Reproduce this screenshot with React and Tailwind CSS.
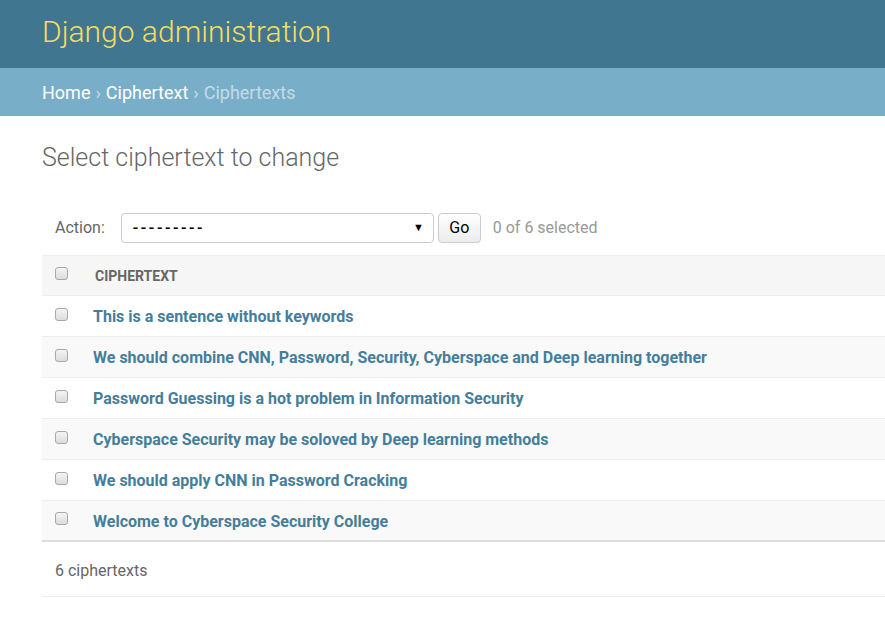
const rows = [
  'This is a sentence without keywords',
  'We should combine CNN, Password, Security, Cyberspace and Deep learning together',
  'Password Guessing is a hot problem in Information Security',
  'Cyberspace Security may be soloved by Deep learning methods',
  'We should apply CNN in Password Cracking',
  'Welcome to Cyberspace Security College',
];

function Checkbox() {
  return (
    <span className="block w-[13px] h-[13px] mb-[6px] rounded-[3px] border border-[#a9a9a9] bg-gradient-to-b from-[#f4f4f4] to-[#dcdcdc]" />
  );
}

export default function App() {
  return (
    <div className="min-h-screen bg-white font-['Roboto',sans-serif] text-[#333] overflow-hidden">
      <header className="h-[68px] bg-[#417690] flex items-center px-[42px] pb-[4px]">
        <h1 className="text-[30px] font-light text-[#f5dd5d] leading-none">Django administration</h1>
      </header>
      <nav className="h-[48px] bg-[#79aec8] flex items-center px-[42px] text-[18px] text-white">
        <span>Home</span>
        <span className="mx-[5px] text-[#c4dce8]">›</span>
        <span>Ciphertext</span>
        <span className="mx-[5px] text-[#c4dce8]">›</span>
        <span className="text-[#c4dce8]">Ciphertexts</span>
      </nav>

      <main className="pl-[42px]">
        <h2 className="mt-[27px] text-[25px] font-light text-[#666] leading-[30px]">Select ciphertext to change</h2>

        <div className="mt-[40px] flex items-center h-[30px] pl-[13px] text-[16px]">
          <span className="text-[#666] mr-[16px]">Action:</span>
          <div className="w-[313px] h-[30px] border border-[#ccc] rounded-[4px] flex items-center justify-between pl-[11px] pr-[9px]">
            <span className="text-black tracking-[2.6px] font-medium">---------</span>
            <span className="text-[11px] text-black">▼</span>
          </div>
          <button className="ml-[4px] w-[43px] h-[30px] border border-[#ccc] rounded-[4px] bg-gradient-to-b from-white to-[#ececec] text-[16px] text-black">Go</button>
          <span className="ml-[12px] text-[#999]">0 of 6 selected</span>
        </div>

        <div className="mt-[12px]">
          <div className="h-[41px] bg-[#f6f6f6] border-y border-[#eee] flex items-center pt-[2px]">
            <div className="w-[53px] pl-[13px]"><Checkbox /></div>
            <span className="text-[14px] font-bold text-[#666] uppercase">Ciphertext</span>
          </div>
          {rows.map((r, i) => (
            <div
              key={r}
              className={`h-[41px] flex items-center pt-[2px] border-b ${i === rows.length - 1 ? 'border-[#ddd] border-b-2' : 'border-[#eee]'} ${i % 2 === 1 ? 'bg-[#f9f9f9]' : 'bg-white'}`}
            >
              <div className="w-[51px] pl-[13px]"><Checkbox /></div>
              <span className="text-[16px] font-bold text-[#447e9b] whitespace-nowrap">{r}</span>
            </div>
          ))}
          <div className="h-[55px] flex items-center pl-[13px] pt-[4px] border-b border-[#eee] text-[16px] text-[#666]">
            6 ciphertexts
          </div>
        </div>
      </main>
    </div>
  );
}
